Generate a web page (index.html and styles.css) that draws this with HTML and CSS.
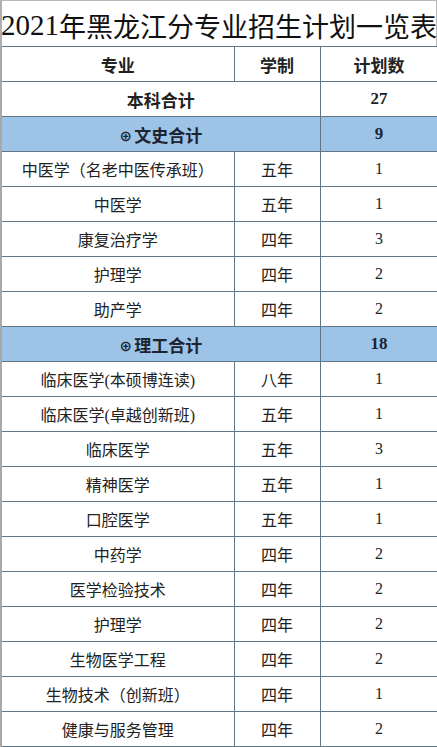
FILE: index.html
```html
<!DOCTYPE html>
<html lang="zh">
<head>
<meta charset="utf-8">
<link rel="stylesheet" href="styles.css">
</head>
<body>
<div class="page">
  <div class="title"><span class="num">2021</span>年黑龙江分专业招生计划一览表</div>
  <table class="plan">
    <colgroup><col class="c1"><col class="c2"><col class="c3"></colgroup>
    <tr class="head"><td>专业</td><td>学制</td><td>计划数</td></tr>
    <tr class="total"><td colspan="2">本科合计</td><td>27</td></tr>
    <tr class="group"><td colspan="2"><span class="plus">⊕</span>文史合计</td><td>9</td></tr>
    <tr><td>中医学（名老中医传承班）</td><td>五年</td><td>1</td></tr>
    <tr><td>中医学</td><td>五年</td><td>1</td></tr>
    <tr><td>康复治疗学</td><td>四年</td><td>3</td></tr>
    <tr><td>护理学</td><td>四年</td><td>2</td></tr>
    <tr><td>助产学</td><td>四年</td><td>2</td></tr>
    <tr class="group"><td colspan="2"><span class="plus">⊕</span>理工合计</td><td>18</td></tr>
    <tr><td>临床医学(本硕博连读)</td><td>八年</td><td>1</td></tr>
    <tr><td>临床医学(卓越创新班)</td><td>五年</td><td>1</td></tr>
    <tr><td>临床医学</td><td>五年</td><td>3</td></tr>
    <tr><td>精神医学</td><td>五年</td><td>1</td></tr>
    <tr><td>口腔医学</td><td>五年</td><td>1</td></tr>
    <tr><td>中药学</td><td>四年</td><td>2</td></tr>
    <tr><td>医学检验技术</td><td>四年</td><td>2</td></tr>
    <tr><td>护理学</td><td>四年</td><td>2</td></tr>
    <tr><td>生物医学工程</td><td>四年</td><td>2</td></tr>
    <tr><td>生物技术（创新班）</td><td>四年</td><td>1</td></tr>
    <tr><td>健康与服务管理</td><td>四年</td><td>2</td></tr>
  </table>
</div>
</body>
</html>
```
FILE: styles.css
```css
html, body {
  margin: 0;
  padding: 0;
  background: #ffffff;
}
.page {
  width: 437px;
  font-family: "Liberation Serif", "Noto Sans CJK SC", sans-serif;
  color: #1a1a1a;
}
.title {
  box-sizing: border-box;
  height: 46px;
  padding-top: 3px;
  border-top: 1px solid #b9b9b9;
  border-left: 2px solid #b0b0b0;
  border-right: 1px solid #b9b9b9;
  display: flex;
  align-items: center;
  justify-content: center;
  font-family: "Noto Sans CJK SC", sans-serif;
  font-size: 27px;
  color: #111;
  white-space: nowrap;
}
.title .num {
  font-family: "Liberation Serif", serif;
  font-size: 29px;
}
.plan {
  width: 437px;
  border-collapse: collapse;
  table-layout: fixed;
}
.c1 { width: 233px; }
.c2 { width: 86px; }
.c3 { width: 118px; }
.plan td {
  border: 1px solid #5f7686;
  height: 34px;
  padding: 0;
  text-align: center;
  vertical-align: middle;
  font-size: 16px;
  color: #222;
  white-space: nowrap;
}
.plan tr td:first-child {
  border-left: 2px solid #a8a8a8;
}
.plan tr td:last-child {
  border-right: 1px solid #a8a8a8;
}
.head td,
.total td,
.group td {
  font-weight: bold;
  font-size: 17px;
}
.group td {
  background: #9dc3e6;
  color: #1c2430;
}
.plus {
  font-size: 13px;
  font-weight: bold;
  margin-right: 2px;
  position: relative;
  top: -1px;
}
```
